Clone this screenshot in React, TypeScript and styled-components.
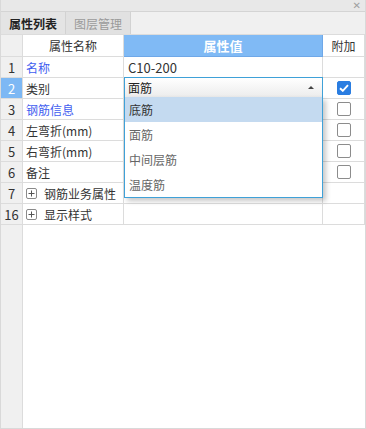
import React from 'react';
import styled, { createGlobalStyle, css } from 'styled-components';

const GlobalStyle = createGlobalStyle`
  html, body {
    margin: 0;
    padding: 0;
    background: #ffffff;
  }
  body {
    font-family: "Noto Sans CJK SC", "Noto Sans", sans-serif;
    font-size: 12px;
    color: #333333;
  }
  #root {
    width: 366px;
    height: 429px;
  }
`;

const Panel = styled.div`
  width: 366px;
  height: 429px;
  display: flex;
  flex-direction: column;
  box-sizing: border-box;
  border: 1px solid #d9d9d9;
  border-top: none;
  overflow: hidden;
`;

const TitleBar = styled.div`
  height: 11px;
  flex: none;
  background: #e8e8e8;
  border-bottom: 1px solid #d4d4d4;
  display: flex;
  justify-content: flex-end;
  align-items: center;
  padding-right: 4px;
`;

const CloseGlyph = styled.span`
  color: #a0a0a0;
  font-family: "DejaVu Sans", sans-serif;
  font-size: 10px;
  line-height: 10px;
`;

const TabBar = styled.div`
  height: 22px;
  flex: none;
  display: flex;
  background: #f0f0f0;
  border-bottom: 1px solid #dcdcdc;
`;

const Tab = styled.div<{ $active?: boolean }>`
  width: 65px;
  box-sizing: border-box;
  display: flex;
  align-items: center;
  justify-content: center;
  font-size: 12px;
  border-right: 1px solid #d2d2d2;
  background: #e1e1e1;
  color: #9a9a9a;
  ${(p) =>
    p.$active &&
    css`
      color: #222222;
      font-weight: bold;
      background: #e4e4e4;
    `}
`;

const Grid = styled.div`
  position: relative;
  flex: 1;
  display: flex;
  flex-direction: column;
`;

const Row = styled.div<{ $header?: boolean }>`
  display: grid;
  grid-template-columns: 22px 101px 199px 42px;
  height: ${(p) => (p.$header ? '22px' : '21px')};
  flex: none;
`;

const Cell = styled.div`
  box-sizing: border-box;
  border-right: 1px solid #dcdcdc;
  border-bottom: 1px solid #dcdcdc;
  display: flex;
  align-items: center;
  padding-left: 3px;
  white-space: nowrap;
  overflow: hidden;
`;

const IndexCell = styled(Cell)<{ $current?: boolean }>`
  justify-content: center;
  padding-left: 0;
  background: ${(p) => (p.$current ? '#7db8f4' : '#f0f0f0')};
  color: ${(p) => (p.$current ? '#ffffff' : '#333333')};
  font-size: 13px;
`;

const HeadCell = styled(Cell)<{ $accent?: boolean }>`
  justify-content: center;
  padding-left: 0;
  font-size: 12px;
  ${(p) =>
    p.$accent &&
    css`
      background: #80baf5;
      color: #ffffff;
      font-size: 13px;
      font-weight: bold;
      border-bottom-color: #6fa8e8;
      border-right-color: #6fa8e8;
    `}
`;

const Label = styled.span<{ $link?: boolean }>`
  color: ${(p) => (p.$link ? '#3f5ef0' : '#333333')};
`;

const ValueCell = styled(Cell)`
  padding-left: 4px;
  font-size: 13px;
`;

const CheckCell = styled(Cell)`
  justify-content: center;
  padding-left: 0;
`;

const Check = styled.span<{ $on?: boolean }>`
  width: 14px;
  height: 14px;
  box-sizing: border-box;
  border-radius: 2px;
  border: 1px solid ${(p) => (p.$on ? '#2a7de1' : '#8c8c8c')};
  background: ${(p) => (p.$on ? '#2a7de1' : '#ffffff')};
  display: flex;
  align-items: center;
  justify-content: center;
`;

const Expander = styled.span`
  width: 11px;
  height: 11px;
  box-sizing: border-box;
  border: 1px solid #8a8a8a;
  border-radius: 2px;
  margin-right: 7px;
  display: inline-flex;
  align-items: center;
  justify-content: center;
`;

const SelectBox = styled.div`
  box-sizing: border-box;
  height: 21px;
  margin-top: -1px;
  border: 1px solid #3fa1d8;
  background: linear-gradient(#ffffff, #ececec);
  display: flex;
  align-items: center;
  justify-content: space-between;
  padding: 0 8px 0 3px;
  font-size: 12px;
  color: #222222;
`;

const Caret = styled.span`
  width: 0;
  height: 0;
  border-left: 3px solid transparent;
  border-right: 3px solid transparent;
  border-bottom: 3px solid #444444;
`;

const Menu = styled.div`
  position: absolute;
  top: 62px;
  left: 123px;
  width: 199px;
  box-sizing: border-box;
  background: #ffffff;
  border: 1px solid #3fa1d8;
  border-top: none;
  box-shadow: 3px 3px 5px rgba(0, 0, 0, 0.22);
  z-index: 2;
`;

const MenuItem = styled.div<{ $selected?: boolean }>`
  height: 25px;
  display: flex;
  align-items: center;
  padding-left: 4px;
  font-size: 12px;
  color: ${(p) => (p.$selected ? '#333333' : '#666666')};
  background: ${(p) => (p.$selected ? '#c4daf0' : 'transparent')};
`;

const Filler = styled.div`
  flex: 1;
  display: grid;
  grid-template-columns: 22px 1fr;
`;

const FillerIndex = styled.div`
  background: #f0f0f0;
  border-right: 1px solid #dcdcdc;
`;

type Prop = {
  n: number;
  label: string;
  link?: boolean;
  value?: string;
  check?: 'on' | 'off';
  group?: boolean;
  select?: boolean;
};

const props: Prop[] = [
  { n: 1, label: '名称', link: true, value: 'C10-200' },
  { n: 2, label: '类别', value: '面筋', check: 'on', select: true },
  { n: 3, label: '钢筋信息', link: true, check: 'off' },
  { n: 4, label: '左弯折(mm)', check: 'off' },
  { n: 5, label: '右弯折(mm)', check: 'off' },
  { n: 6, label: '备注', check: 'off' },
  { n: 7, label: '钢筋业务属性', group: true },
  { n: 16, label: '显示样式', group: true },
];

const options = ['底筋', '面筋', '中间层筋', '温度筋'];

function Tick() {
  return (
    <svg width="10" height="8" viewBox="0 0 10 8">
      <path d="M1 4.2 L3.8 6.8 L9 1.2" fill="none" stroke="#ffffff" strokeWidth="1.9" />
    </svg>
  );
}

function Plus() {
  return (
    <svg width="7" height="7" viewBox="0 0 7 7">
      <path d="M0.5 3.5 H6.5 M3.5 0.5 V6.5" stroke="#555555" strokeWidth="1" />
    </svg>
  );
}

export default function App() {
  return (
    <>
      <GlobalStyle />
      <Panel>
        <TitleBar>
          <CloseGlyph>✕</CloseGlyph>
        </TitleBar>
        <TabBar>
          <Tab $active>属性列表</Tab>
          <Tab>图层管理</Tab>
        </TabBar>
        <Grid>
          <Row $header>
            <IndexCell />
            <HeadCell>属性名称</HeadCell>
            <HeadCell $accent>属性值</HeadCell>
            <HeadCell>附加</HeadCell>
          </Row>
          {props.map((p) => (
            <Row key={p.n}>
              <IndexCell $current={p.select}>{p.n}</IndexCell>
              <Cell>
                {p.group && (
                  <Expander>
                    <Plus />
                  </Expander>
                )}
                <Label $link={p.link}>{p.label}</Label>
              </Cell>
              {p.select ? (
                <SelectBox>
                  <span>{p.value}</span>
                  <Caret />
                </SelectBox>
              ) : (
                <ValueCell>{p.value}</ValueCell>
              )}
              <CheckCell>
                {p.check && <Check $on={p.check === 'on'}>{p.check === 'on' && <Tick />}</Check>}
              </CheckCell>
            </Row>
          ))}
          <Filler>
            <FillerIndex />
            <div />
          </Filler>
          <Menu>
            {options.map((o, i) => (
              <MenuItem key={o} $selected={i === 0}>
                {o}
              </MenuItem>
            ))}
          </Menu>
        </Grid>
      </Panel>
    </>
  );
}
